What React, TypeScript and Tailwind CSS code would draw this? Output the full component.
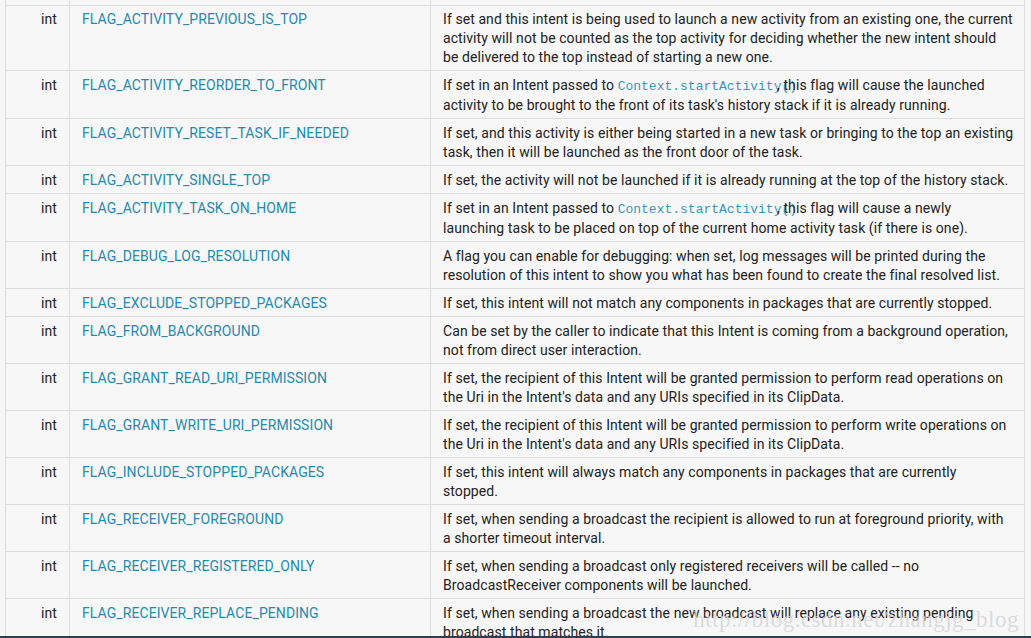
import React from "react";

type Row = { name: string; lines: React.ReactNode[] };

const Code = () => (
  <code className="font-['Liberation_Mono',monospace] text-[13px] tracking-normal text-[#3a95bd] mr-[-20px]">
    Context.startActivity()
  </code>
);

const rows: Row[] = [
  {
    name: "FLAG_ACTIVITY_PREVIOUS_IS_TOP",
    lines: [
      "If set and this intent is being used to launch a new activity from an existing one, the current",
      "activity will not be counted as the top activity for deciding whether the new intent should",
      "be delivered to the top instead of starting a new one.",
    ],
  },
  {
    name: "FLAG_ACTIVITY_REORDER_TO_FRONT",
    lines: [
      <>
        If set in an Intent passed to <Code />, this flag will cause the launched
      </>,
      "activity to be brought to the front of its task's history stack if it is already running.",
    ],
  },
  {
    name: "FLAG_ACTIVITY_RESET_TASK_IF_NEEDED",
    lines: [
      "If set, and this activity is either being started in a new task or bringing to the top an existing",
      "task, then it will be launched as the front door of the task.",
    ],
  },
  {
    name: "FLAG_ACTIVITY_SINGLE_TOP",
    lines: ["If set, the activity will not be launched if it is already running at the top of the history stack."],
  },
  {
    name: "FLAG_ACTIVITY_TASK_ON_HOME",
    lines: [
      <>
        If set in an Intent passed to <Code />, this flag will cause a newly
      </>,
      "launching task to be placed on top of the current home activity task (if there is one).",
    ],
  },
  {
    name: "FLAG_DEBUG_LOG_RESOLUTION",
    lines: [
      "A flag you can enable for debugging: when set, log messages will be printed during the",
      "resolution of this intent to show you what has been found to create the final resolved list.",
    ],
  },
  {
    name: "FLAG_EXCLUDE_STOPPED_PACKAGES",
    lines: ["If set, this intent will not match any components in packages that are currently stopped."],
  },
  {
    name: "FLAG_FROM_BACKGROUND",
    lines: [
      "Can be set by the caller to indicate that this Intent is coming from a background operation,",
      "not from direct user interaction.",
    ],
  },
  {
    name: "FLAG_GRANT_READ_URI_PERMISSION",
    lines: [
      "If set, the recipient of this Intent will be granted permission to perform read operations on",
      "the Uri in the Intent's data and any URIs specified in its ClipData.",
    ],
  },
  {
    name: "FLAG_GRANT_WRITE_URI_PERMISSION",
    lines: [
      "If set, the recipient of this Intent will be granted permission to perform write operations on",
      "the Uri in the Intent's data and any URIs specified in its ClipData.",
    ],
  },
  {
    name: "FLAG_INCLUDE_STOPPED_PACKAGES",
    lines: [
      "If set, this intent will always match any components in packages that are currently",
      "stopped.",
    ],
  },
  {
    name: "FLAG_RECEIVER_FOREGROUND",
    lines: [
      "If set, when sending a broadcast the recipient is allowed to run at foreground priority, with",
      "a shorter timeout interval.",
    ],
  },
  {
    name: "FLAG_RECEIVER_REGISTERED_ONLY",
    lines: [
      "If set, when sending a broadcast only registered receivers will be called -- no",
      "BroadcastReceiver components will be launched.",
    ],
  },
  {
    name: "FLAG_RECEIVER_REPLACE_PENDING",
    lines: [
      "If set, when sending a broadcast the new broadcast will replace any existing pending",
      "broadcast that matches it.",
    ],
  },
];

export default function App() {
  return (
    <div className="relative h-[638px] w-[1031px] overflow-hidden bg-[#f7f7f7] font-['Roboto',sans-serif] text-[14px] leading-[19px] tracking-[0.08px] text-[#222222] [font-feature-settings:'calt'_0,'liga'_0]">
      <table className="ml-[5px] w-[1020px] table-fixed border-collapse">
        <colgroup>
          <col className="w-[64px]" />
          <col className="w-[361px]" />
          <col />
        </colgroup>
        <tbody>
          <tr className="h-[5px]">
            <td className="border-x border-[#dddddd] p-0" />
            <td className="border-x border-[#dddddd] p-0" />
            <td className="border-x border-[#dddddd] p-0" />
          </tr>
          {rows.map((r, idx) => {
            const pad = idx === 0 ? "pt-[4px] pb-[3px]" : "pt-[5px] pb-[3px]";
            return (
              <tr key={r.name} className="border-t border-[#dddddd] align-top">
                <td className={`border-x border-[#dddddd] px-3 ${pad} text-right`}>int</td>
                <td className={`border-x border-[#dddddd] px-3 ${pad} text-[#258aaf] whitespace-nowrap`}>
                  {r.name}
                </td>
                <td className={`border-x border-[#dddddd] px-3 ${pad} whitespace-nowrap`}>
                  {r.lines.map((l, i) => (
                    <div key={i}>{l}</div>
                  ))}
                </td>
              </tr>
            );
          })}
        </tbody>
      </table>
      <div className="pointer-events-none absolute right-[12px] bottom-[4px] font-['Liberation_Serif',serif] text-[23px] leading-[28px] tracking-[0.5px] text-[#d4d4d4]/80">
        http://blog.csdn.net/zhangjg_blog
      </div>
      <div className="absolute inset-x-0 bottom-0 h-[2px] bg-[#2c3e50]" />
    </div>
  );
}
